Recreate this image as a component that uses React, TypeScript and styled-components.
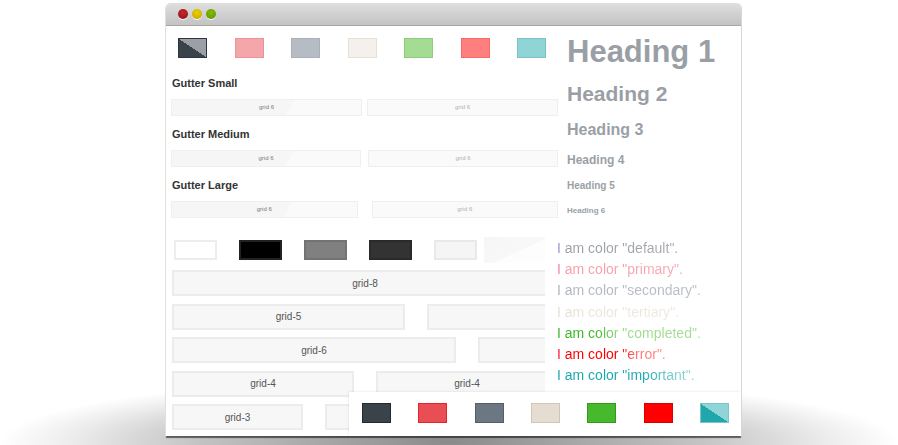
import React from "react";
import styled, { createGlobalStyle } from "styled-components";

const GlobalStyle = createGlobalStyle`
  html, body { margin: 0; padding: 0; background: #fff; }
  body { font-family: "Liberation Sans", Arial, sans-serif; }
  * { box-sizing: border-box; }
`;

const Stage = styled.div`
  position: relative;
  width: 898px;
  height: 445px;
  overflow: hidden;
  padding: 3px 0 0 166px;
`;

const FloorShadow = styled.div`
  position: absolute;
  left: 0;
  right: 0;
  top: 370px;
  height: 100px;
  background: radial-gradient(
    ellipse 50% 64% at 50% 72%,
    rgba(0, 0, 0, 0.46) 0%,
    rgba(0, 0, 0, 0.24) 55%,
    rgba(0, 0, 0, 0.07) 85%,
    rgba(0, 0, 0, 0) 100%
  );
`;

const Window = styled.div`
  position: relative;
  width: 575px;
  height: 433px;
  display: flex;
  flex-direction: column;
  background: #fff;
  border-radius: 5px 5px 0 0;
  box-shadow: 0 2px 1px rgba(0, 0, 0, 0.55), 1px 0 0 #e4e4e4, -1px 0 0 #ececec;
`;

const TitleBar = styled.div`
  flex: none;
  height: 23px;
  display: flex;
  align-items: center;
  gap: 4px;
  padding: 0 0 0 12px;
  background: linear-gradient(#dfdfdf, #c3c3c3);
  border-bottom: 1px solid #a6a6a6;
  border-radius: 5px 5px 0 0;
`;

const Light = styled.span<{ $c1: string; $c2: string }>`
  width: 10px;
  height: 10px;
  border-radius: 50%;
  background: radial-gradient(circle at 50% 35%, ${(p) => p.$c1}, ${(p) => p.$c2});
  box-shadow: 0 1px 0 rgba(255, 255, 255, 0.9);
`;

const Body = styled.div`
  position: relative;
  flex: 1;
  display: flex;
  flex-direction: column;
  overflow: hidden;
`;

const TopSection = styled.div`
  flex: none;
  height: 202px;
  display: flex;
`;

const GutterPanel = styled.div`
  width: 392px;
  padding-top: 12px;
`;

const SwatchRow = styled.div`
  display: flex;
  justify-content: space-between;
  padding: 0 12px;
`;

const Swatch = styled.span<{ $bg: string; $border: string }>`
  width: 29px;
  height: 20px;
  background: ${(p) => p.$bg};
  border: 1px solid ${(p) => p.$border};
`;

const GutterSection = styled.div`
  padding: 7px 0 0 5px;
`;

const GutterTitle = styled.div`
  margin: 11px 0 9px 1px;
  font-size: 11px;
  line-height: 14px;
  font-weight: bold;
  color: #333;
`;

const GutterRow = styled.div<{ $gap: number }>`
  display: flex;
  gap: ${(p) => p.$gap}px;
`;

const SmallCell = styled.div<{ $faded?: boolean }>`
  flex: 1;
  height: 17px;
  line-height: 15px;
  text-align: center;
  font-size: 6px;
  color: ${(p) => (p.$faded ? "#b0b0b0" : "#777")};
  background: ${(p) =>
    p.$faded
      ? "#fafafa"
      : "linear-gradient(118deg, #f6f6f6 0%, #f6f6f6 62%, #fafafa 62%, #fafafa 100%)"};
  border: 1px solid #efefef;
`;

const HeadingPanel = styled.div`
  flex: 1;
  display: flex;
  flex-direction: column;
  align-items: flex-start;
  padding: 8px 0 0 9px;
  color: #9a9fa6;
  font-weight: bold;
`;

const Heading = styled.div<{ $size: number; $lh: number; $mt: number }>`
  font-size: ${(p) => p.$size}px;
  line-height: ${(p) => p.$lh}px;
  margin-top: ${(p) => p.$mt}px;
  white-space: nowrap;
`;

const BottomSection = styled.div`
  flex: 1;
  display: flex;
`;

const GridPanel = styled.div`
  width: 379px;
  flex: none;
  overflow: hidden;
  padding-top: 12px;
`;

const ToneRow = styled.div`
  display: flex;
  align-items: center;
  gap: 22px;
  padding-left: 8px;
  height: 20px;
`;

const Tone = styled.span<{ $bg: string; $border: string }>`
  flex: none;
  width: 43px;
  height: 20px;
  background: ${(p) => p.$bg};
  border: 2px solid ${(p) => p.$border};
`;

const Gloss = styled.span`
  flex: none;
  width: 62px;
  height: 26px;
  margin-left: -15px;
  background: linear-gradient(155deg, #f6f6f6 0%, #f8f8f8 55%, #fdfdfd 56%, #fdfdfd 100%);
`;

const Grid = styled.div`
  display: grid;
  grid-template-columns: repeat(12, 29px);
  grid-auto-rows: 26px;
  column-gap: 22px;
  row-gap: 7.5px;
  margin-top: 10px;
  padding-left: 6px;
  width: max-content;
`;

const GridCell = styled.div<{ $span: number }>`
  grid-column: span ${(p) => p.$span};
  display: flex;
  align-items: center;
  justify-content: center;
  font-size: 10px;
  color: #555;
  background: #f7f7f7;
  border: 2px solid #ececec;
`;

const TextPanel = styled.div`
  flex: 1;
  padding: 10px 0 0 12px;
  background: #fff;
`;

const ColorLine = styled.div`
  font-size: 14px;
  line-height: 21.2px;
  white-space: nowrap;
`;

const ColorText = styled.span<{ $gradient: string }>`
  display: inline-block;
  background: ${(p) => p.$gradient};
  -webkit-background-clip: text;
  background-clip: text;
  color: transparent;
`;

const SwatchStrip = styled.div`
  position: absolute;
  right: 0;
  bottom: 0;
  width: 392px;
  height: 44px;
  display: flex;
  justify-content: space-between;
  align-items: flex-start;
  padding: 11px 12px 0 13px;
  background: #fff;
  box-shadow: -1px -1px 2px rgba(0, 0, 0, 0.06);
`;

const topSwatches = [
  { bg: "linear-gradient(to bottom left, #9ba0a6 50%, #3a424a 50%)", border: "#2f363d" },
  { bg: "#f5a6aa", border: "#ee9097" },
  { bg: "#b6bcc3", border: "#a9afb6" },
  { bg: "#f4f1ec", border: "#e6dfd3" },
  { bg: "#a4dc94", border: "#8fcd7e" },
  { bg: "#ff7f7f", border: "#f06c6c" },
  { bg: "#8fd5d8", border: "#79c3c6" },
];

const bottomSwatches = [
  { bg: "#3a424a", border: "#22292f" },
  { bg: "#e84e54", border: "#e6232b" },
  { bg: "#6b7783", border: "#535e69" },
  { bg: "#e6ddd2", border: "#d2c5b5" },
  { bg: "#46b92c", border: "#36971f" },
  { bg: "#ff0000", border: "#d80000" },
  { bg: "linear-gradient(to top right, #1fa7ab 50%, #8fd5d8 50%)", border: "#7cc4c7" },
];

const tones = [
  { bg: "#ffffff", border: "#ededed" },
  { bg: "#000000", border: "#222" },
  { bg: "#808080", border: "#737373" },
  { bg: "#333333", border: "#2a2a2a" },
  { bg: "#f5f5f5", border: "#e9e9e9" },
];

const gutters = [
  { title: "Gutter Small", gap: 5 },
  { title: "Gutter Medium", gap: 7 },
  { title: "Gutter Large", gap: 14 },
];

const headings = [
  { text: "Heading 1", size: 31, lh: 36, mt: 0 },
  { text: "Heading 2", size: 21, lh: 24, mt: 12 },
  { text: "Heading 3", size: 16, lh: 20, mt: 14 },
  { text: "Heading 4", size: 12, lh: 16, mt: 12 },
  { text: "Heading 5", size: 10, lh: 14, mt: 11 },
  { text: "Heading 6", size: 8, lh: 12, mt: 12 },
];

// cells whose label lies under another panel carry no label
const gridCells: { span: number; label: boolean }[] = [
  { span: 8, label: true },
  { span: 4, label: false },
  { span: 5, label: true },
  { span: 7, label: false },
  { span: 6, label: true },
  { span: 6, label: false },
  { span: 4, label: true },
  { span: 4, label: true },
  { span: 4, label: false },
  { span: 3, label: true },
  { span: 3, label: false },
  { span: 3, label: false },
  { span: 3, label: false },
];

const colorLines = [
  {
    name: "default",
    gradient: "linear-gradient(90deg, #a08fd0 0px, #a08fd0 4px, #9a9ea5 7px, #a7aab0 100%)",
  },
  {
    name: "primary",
    gradient: "linear-gradient(90deg, #f2809b 0px, #f2809b 4px, #f59ca8 8px, #f5aab0 100%)",
  },
  {
    name: "secondary",
    gradient: "linear-gradient(90deg, #a7b0bc 0px, #b3b8c0 20px, #b9bec5 100%)",
  },
  {
    name: "tertiary",
    gradient: "linear-gradient(90deg, #e6dccd 0px, #ece5da 30px, #efe9e0 100%)",
  },
  {
    name: "completed",
    gradient: "linear-gradient(90deg, #33b41c 0px, #3ab626 38px, #9bd98a 62px, #a6dd96 100%)",
  },
  {
    name: "error",
    gradient: "linear-gradient(90deg, #ff1450 0px, #ff0000 10px, #ff0000 62px, #ff7474 80px, #ff8a8a 100%)",
  },
  {
    name: "important",
    gradient: "linear-gradient(90deg, #17a4ad 0px, #1fa8b0 85px, #86d1d5 120px, #90d6d9 100%)",
  },
];

export default function App() {
  return (
    <Stage>
      <GlobalStyle />
      <FloorShadow />
      <Window>
        <TitleBar>
          <Light $c1="#c8262d" $c2="#8c1016" />
          <Light $c1="#ecd000" $c2="#c4a200" />
          <Light $c1="#84bd0a" $c2="#5e9000" />
        </TitleBar>
        <Body>
          <TopSection>
            <GutterPanel>
              <SwatchRow>
                {topSwatches.map((s, i) => (
                  <Swatch key={i} $bg={s.bg} $border={s.border} />
                ))}
              </SwatchRow>
              <GutterSection>
                {gutters.map((g) => (
                  <React.Fragment key={g.title}>
                    <GutterTitle>{g.title}</GutterTitle>
                    <GutterRow $gap={g.gap}>
                      <SmallCell>grid 6</SmallCell>
                      <SmallCell $faded>grid 6</SmallCell>
                    </GutterRow>
                  </React.Fragment>
                ))}
              </GutterSection>
            </GutterPanel>
            <HeadingPanel>
              {headings.map((h) => (
                <Heading key={h.text} $size={h.size} $lh={h.lh} $mt={h.mt}>
                  {h.text}
                </Heading>
              ))}
            </HeadingPanel>
          </TopSection>
          <BottomSection>
            <GridPanel>
              <ToneRow>
                {tones.map((t, i) => (
                  <Tone key={i} $bg={t.bg} $border={t.border} />
                ))}
                <Gloss />
              </ToneRow>
              <Grid>
                {gridCells.map((c, i) => (
                  <GridCell key={i} $span={c.span}>
                    {c.label ? `grid-${c.span}` : null}
                  </GridCell>
                ))}
              </Grid>
            </GridPanel>
            <TextPanel>
              {colorLines.map((c) => (
                <ColorLine key={c.name}>
                  <ColorText $gradient={c.gradient}>I am color "{c.name}".</ColorText>
                </ColorLine>
              ))}
            </TextPanel>
          </BottomSection>
          <SwatchStrip>
            {bottomSwatches.map((s, i) => (
              <Swatch key={i} $bg={s.bg} $border={s.border} />
            ))}
          </SwatchStrip>
        </Body>
      </Window>
    </Stage>
  );
}
